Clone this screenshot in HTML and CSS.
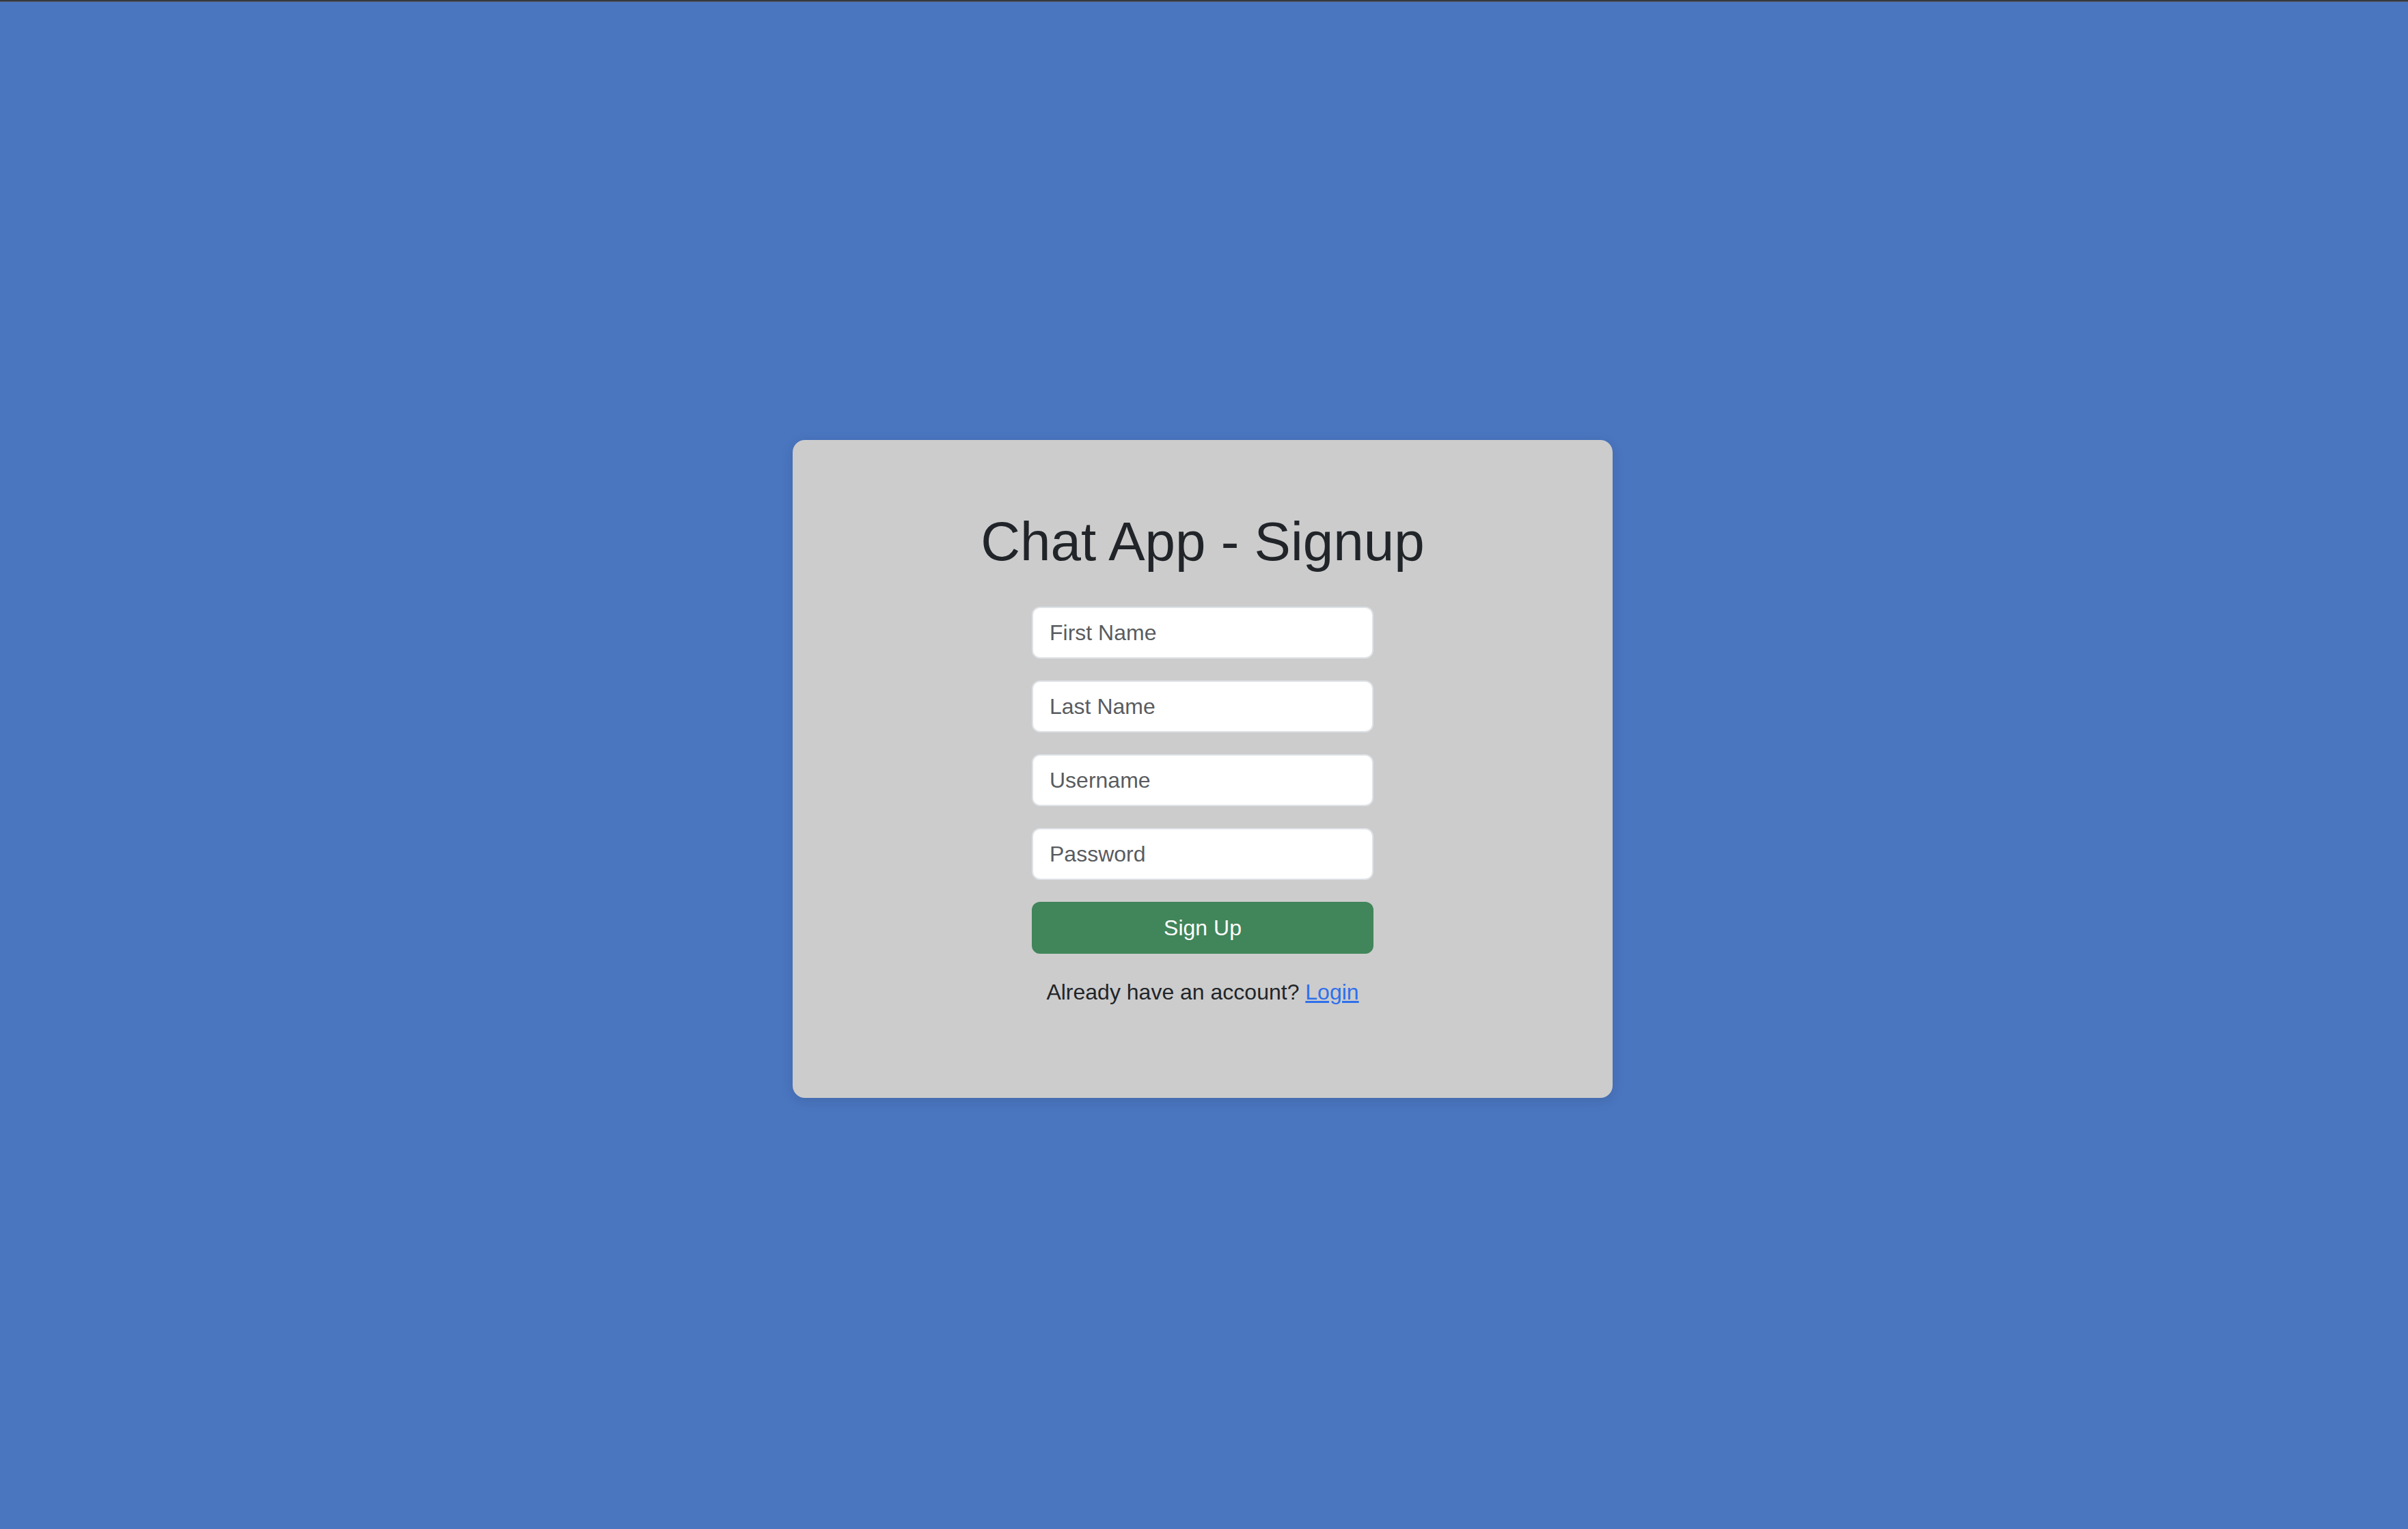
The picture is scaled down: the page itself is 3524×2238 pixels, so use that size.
FILE: index.html
```html
<!DOCTYPE html>
<html lang="en">
<head>
<meta charset="utf-8">
<title>Chat App - Signup</title>
<link rel="stylesheet" href="styles.css">
</head>
<body>
<div class="topline"></div>
<main class="page">
  <section class="card">
    <h1 class="title">Chat App - Signup</h1>
    <form class="form">
      <input class="field" type="text" placeholder="First Name">
      <input class="field" type="text" placeholder="Last Name">
      <input class="field" type="text" placeholder="Username">
      <input class="field" type="password" placeholder="Password">
      <button class="btn" type="button">Sign Up</button>
    </form>
    <p class="alt">Already have an account? <a class="link" href="#">Login</a></p>
  </section>
</main>
</body>
</html>
```

FILE: styles.css
```css
* { box-sizing: border-box; }
html, body { margin: 0; padding: 0; }
body {
  background: #4a76c0;
  font-family: "Liberation Sans", Arial, sans-serif;
  color: #212529;
  height: 2238px;
  display: flex;
  flex-direction: column;
}
.topline {
  height: 3px;
  background: #35383f;
  border-bottom: 1px solid #5a6275;
  flex: none;
}
.page {
  flex: 1;
  display: flex;
  align-items: center;
  justify-content: center;
  padding-top: 10px;
  padding-right: 4px;
}
.card {
  width: 1200px;
  background: #cccccc;
  border-radius: 18px;
  box-shadow: 0 4px 18px rgba(0, 0, 0, 0.12);
  padding: 101px 0 99px;
  display: flex;
  flex-direction: column;
  align-items: center;
}
.title {
  margin: 0 0 47px;
  font-size: 80px;
  font-weight: 400;
  line-height: 96px;
  color: #212529;
}
.form {
  width: 500px;
  display: flex;
  flex-direction: column;
  gap: 32px;
}
.field {
  display: block;
  width: 100%;
  height: 76px;
  padding: 12px 24px;
  font-family: inherit;
  font-size: 32px;
  line-height: 48px;
  color: #212529;
  background: #fff;
  border: 2px solid #dee2e6;
  border-radius: 12px;
  outline: none;
}
.field::placeholder { color: #595c5f; opacity: 1; }
.btn {
  display: block;
  width: 100%;
  height: 76px;
  font-family: inherit;
  font-size: 32px;
  line-height: 48px;
  color: #fff;
  background: #41855a;
  border: none;
  border-radius: 12px;
  padding: 0;
}
.alt {
  margin: 32px 0 32px;
  font-size: 32px;
  line-height: 48px;
  color: #212529;
}
.link { color: #2f6fec; text-decoration: underline; }
```
